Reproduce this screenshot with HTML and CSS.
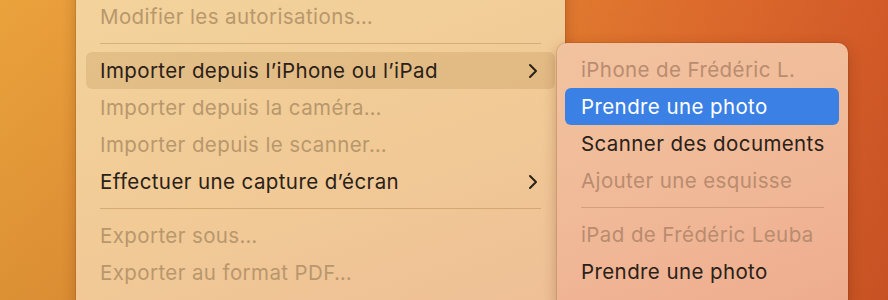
FILE: index.html
```html
<!DOCTYPE html>
<html lang="fr">
<head>
  <meta charset="UTF-8" />
  <title>Menu Fichier</title>
  <link rel="stylesheet" href="styles.css">
</head>
<body>
<div class="desktop">
  <!-- Main menu, top cut off by the screenshot -->
  <div class="menu main-menu">
    <div class="menu-item disabled">Modifier les autorisations…</div>
    <div class="menu-sep"></div>
    <div class="menu-item open">
      <span>Importer depuis l’iPhone ou l’iPad</span>
      <svg class="chevron" viewBox="0 0 10 16" width="10" height="16"><path d="M2 2 L8 8 L2 14" /></svg>
    </div>
    <div class="menu-item disabled">Importer depuis la caméra…</div>
    <div class="menu-item disabled">Importer depuis le scanner…</div>
    <div class="menu-item">
      <span>Effectuer une capture d’écran</span>
      <svg class="chevron" viewBox="0 0 10 16" width="10" height="16"><path d="M2 2 L8 8 L2 14" /></svg>
    </div>
    <div class="menu-sep"></div>
    <div class="menu-item disabled">Exporter sous…</div>
    <div class="menu-item disabled">Exporter au format PDF…</div>
  </div>

  <!-- Submenu flies out over the main menu -->
  <div class="menu sub-menu">
    <div class="menu-item disabled">iPhone de Frédéric L.</div>
    <div class="menu-item selected">Prendre une photo</div>
    <div class="menu-item">Scanner des documents</div>
    <div class="menu-item disabled">Ajouter une esquisse</div>
    <div class="menu-sep"></div>
    <div class="menu-item disabled">iPad de Frédéric Leuba</div>
    <div class="menu-item">Prendre une photo</div>
  </div>
</div>
</body>
</html>
```

FILE: styles.css
```css
body, html {
  margin: 0;
  padding: 0;
  height: 100%;
  overflow: hidden;
  font-family: 'Inter', 'Liberation Sans', sans-serif;
  font-size: 20.5px;
  letter-spacing: 0.4px;
  color: #2a2118;
}
.desktop {
  position: relative;
  height: 300px;
  background:
    linear-gradient(180deg, rgba(255, 255, 255, 0) 0%, rgba(120, 20, 0, 0.12) 100%),
    linear-gradient(90deg, #eaa23c 0%, #e68b33 45%, #dc6a2c 80%, #d25a28 100%);
}
.menu {
  box-sizing: border-box;
  border-radius: 10px;
  box-shadow: 0 0 0 1px rgba(90, 40, 0, 0.12), 0 4px 14px rgba(80, 20, 0, 0.28);
}
.main-menu {
  width: 489px;
  margin-left: 76px;
  position: relative;
  top: -30px;
  padding: 28px 10px 20px;
  background: linear-gradient(160deg, #f3d49c 0%, #f1ca96 55%, #efbf96 100%);
}
.sub-menu {
  position: absolute;
  left: 557px;
  top: 43px;
  width: 291px;
  padding: 8px 9px 20px 8px;
  background: linear-gradient(160deg, #f2c3a0 0%, #f0b796 60%, #eeab8e 100%);
}
.menu-item {
  height: 37px;
  display: flex;
  align-items: center;
  justify-content: space-between;
  padding: 0 17px 0 14px;
  border-radius: 6px;
  white-space: nowrap;
}
.sub-menu .menu-item {
  padding: 0 16px;
}
.menu-item.disabled {
  color: #b8976d;
}
.sub-menu .menu-item.disabled {
  color: #b98c70;
}
.menu-item.open {
  background: rgba(150, 100, 40, 0.16);
}
.menu-item.selected {
  background: #3b80e5;
  color: #fff;
}
.menu-sep {
  height: 17px;
  display: flex;
  align-items: center;
  margin: 0 14px;
}
.sub-menu .menu-sep {
  margin: 0 15px 0 16px;
}
.menu-sep::before {
  content: "";
  flex: 1;
  height: 1px;
  background: rgba(150, 100, 40, 0.3);
}
.chevron {
  fill: none;
  stroke: #2a2118;
  stroke-width: 2;
  stroke-linecap: round;
  stroke-linejoin: round;
}
```
